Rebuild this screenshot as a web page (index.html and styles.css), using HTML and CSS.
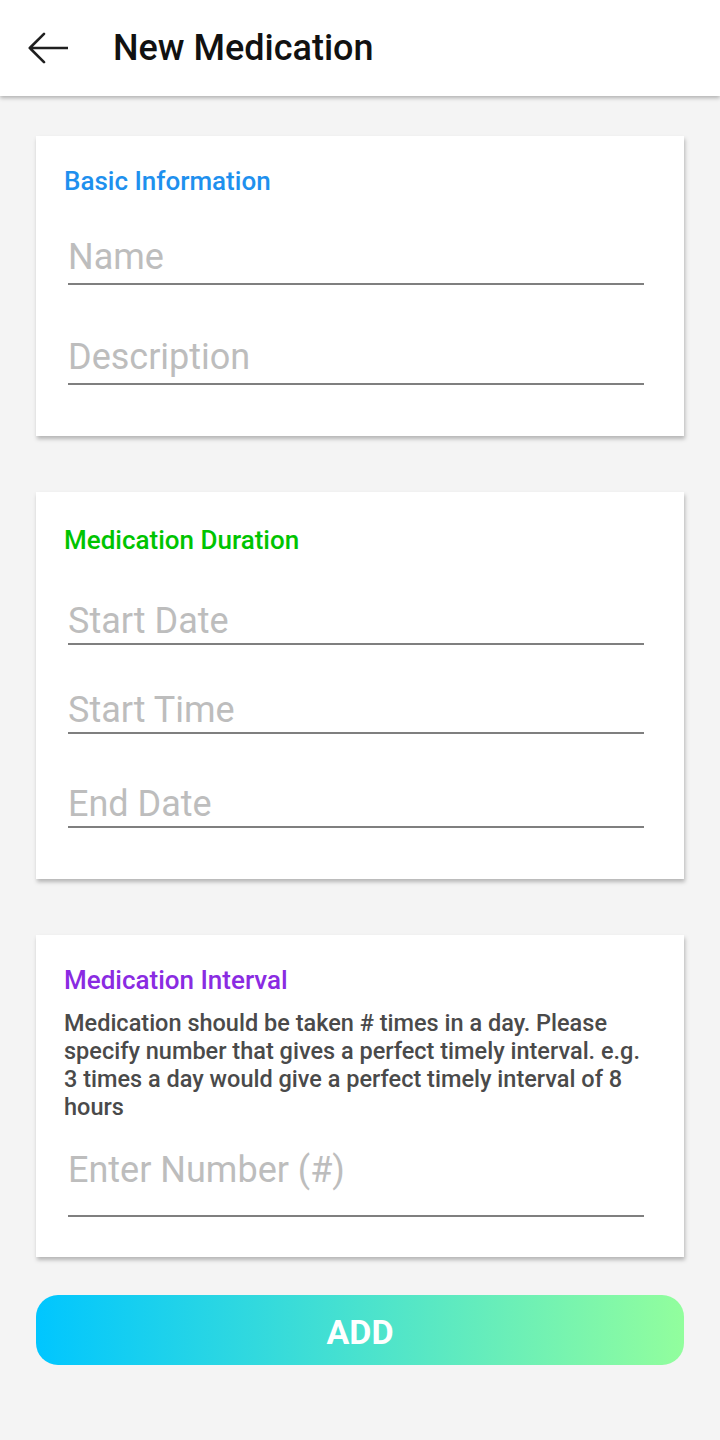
FILE: index.html
```html
<!DOCTYPE html>
<html lang="en">
<head>
<meta charset="utf-8">
<title>New Medication</title>
<link rel="stylesheet" href="styles.css">
</head>
<body>
<header class="appbar">
  <svg class="back" viewBox="0 0 40 32" width="40" height="32" aria-hidden="true">
    <path d="M1.8 16 H40 M16 1.8 L1.8 16 L16 30.2" fill="none" stroke="#1f1f1f" stroke-width="2.6" stroke-linecap="round" stroke-linejoin="round"/>
  </svg>
  <h1 class="appbar-title">New Medication</h1>
</header>
<main class="content">
  <section class="card card-basic">
    <h2 class="card-title title-blue">Basic Information</h2>
    <input class="field field-first-basic" type="text" placeholder="Name">
    <input class="field field-gap-lg" type="text" placeholder="Description">
  </section>
  <section class="card card-duration">
    <h2 class="card-title title-green">Medication Duration</h2>
    <input class="field field-low field-first-duration" type="text" placeholder="Start Date">
    <input class="field field-low field-gap-md" type="text" placeholder="Start Time">
    <input class="field field-low field-gap-ml" type="text" placeholder="End Date">
  </section>
  <section class="card card-interval">
    <h2 class="card-title title-purple">Medication Interval</h2>
    <p class="card-text">Medication should be taken # times in a day. Please specify number that gives a perfect timely interval. e.g. 3 times a day would give a perfect timely interval of 8 hours</p>
    <input class="field field-tall" type="text" placeholder="Enter Number (#)">
  </section>
  <button class="add-btn" type="button">ADD</button>
</main>
</body>
</html>
```
FILE: styles.css
```css
* { box-sizing: border-box; }
html, body {
  margin: 0;
  padding: 0;
  background: #f4f4f4;
  font-family: Roboto, "Noto Sans", "Liberation Sans", sans-serif;
}
.appbar {
  height: 96px;
  background: #ffffff;
  display: flex;
  align-items: center;
  padding-left: 28px;
  box-shadow: 0 2px 4px rgba(0, 0, 0, 0.28);
  position: relative;
  z-index: 1;
}
.back {
  display: block;
  flex: none;
}
.appbar-title {
  margin: 0 0 0 45px;
  font-size: 36px;
  font-weight: 500;
  line-height: 96px;
  color: #111111;
}
.content {
  padding: 40px 36px 60px;
  display: flex;
  flex-direction: column;
}
.card {
  background: #ffffff;
  display: flex;
  flex-direction: column;
  padding: 30px 40px 51px 32px;
  box-shadow: 1px 3px 4px rgba(0, 0, 0, 0.26);
}
.card + .card { margin-top: 56px; }
.card-duration { padding-top: 33px; }
.card-interval { padding-top: 30px; padding-bottom: 40px; }
.card-title {
  margin: 0 0 0 -4px;
  font-size: 26px;
  line-height: 30px;
  font-weight: 500;
}
.title-blue { color: #1e90ee; }
.title-green { color: #00c400; }
.title-purple { color: #8a2be2; }
.card-text {
  margin: 14px -10px 0 -4px;
  font-size: 23.5px;
  line-height: 28px;
  font-weight: 500;
  color: #4a4a4a;
}
.field {
  display: block;
  width: 100%;
  margin: 0;
  padding: 0 0 4px 0;
  height: 50px;
  border: none;
  border-bottom: 2px solid #7f7f7f;
  background: transparent;
  font-family: inherit;
  font-size: 36px;
  line-height: 44px;
  color: #222222;
  outline: none;
  border-radius: 0;
}
.field::placeholder { color: #bdbdbd; opacity: 1; }
.field-low {
  padding-top: 4px;
  padding-bottom: 0;
}
.field-first-basic { margin-top: 39px; }
.field-gap-lg { margin-top: 50px; }
.field-first-duration { margin-top: 40px; }
.field-gap-md { margin-top: 39px; }
.field-gap-ml { margin-top: 44px; }
.field-tall {
  margin-top: 27px;
  height: 69px;
  padding-bottom: 23px;
}
.add-btn {
  margin-top: 38px;
  height: 70px;
  border: none;
  border-radius: 22px;
  background: linear-gradient(90deg, #00c6ff 0%, #92fe9d 100%);
  color: #ffffff;
  font-family: inherit;
  font-size: 34px;
  font-weight: 700;
  padding: 3px 0 0;
  cursor: pointer;
}
```
